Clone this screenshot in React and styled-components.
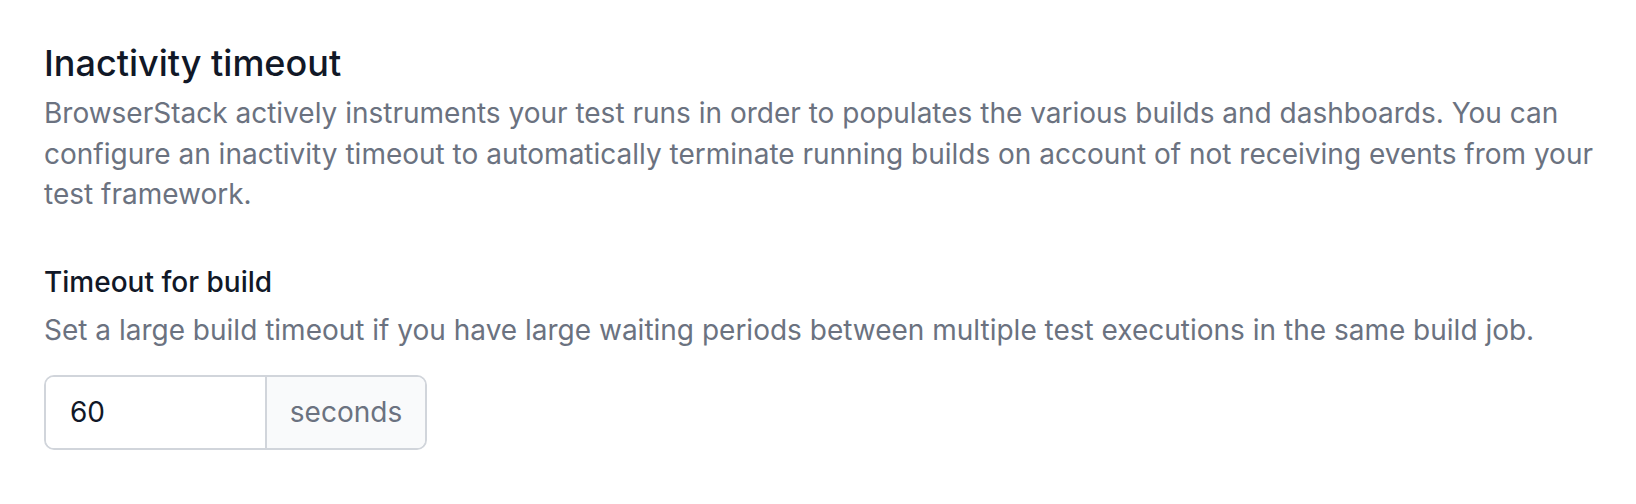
import React, { useState } from 'react';
import styled, { createGlobalStyle } from 'styled-components';

const GlobalStyle = createGlobalStyle`
    body {
        margin: 0;
        background: #ffffff;
        font-family: Inter, "Noto Sans", sans-serif;
    }
`;

const Page = styled.div`
    padding: 43px 30px 40px 44px;
`;

const Title = styled.h2`
    margin: 0;
    font-size: 36px;
    line-height: 40px;
    font-weight: 500;
    color: #111827;
`;

const Description = styled.p`
    margin: ${(p) => p.$top || 10}px 0 0;
    font-size: 28px;
    line-height: 40.7px;
    font-weight: 400;
    color: #6b7280;
`;

const Field = styled.div`
    margin-top: 49px;
`;

const Label = styled.label`
    display: block;
    font-size: 28px;
    line-height: 36px;
    font-weight: 500;
    color: #111827;
`;

const InputGroup = styled.div`
    display: flex;
    width: 383px;
    height: 75px;
    margin-top: 24px;
    border: 2px solid #d1d5db;
    border-radius: 10px;
    box-sizing: border-box;
    overflow: hidden;
`;

const Input = styled.input`
    flex: 0 0 219px;
    min-width: 0;
    border: none;
    outline: none;
    padding: 0 24px;
    box-sizing: border-box;
    font-family: inherit;
    font-size: 28px;
    color: #111827;
    background: #ffffff;
`;

const Addon = styled.span`
    flex: 1;
    display: flex;
    align-items: center;
    justify-content: center;
    border-left: 2px solid #d1d5db;
    background: #f9fafb;
    font-size: 28px;
    color: #6b7280;
`;

function App() {
    const [timeout, timeoutSet] = useState('60');
    return (
        <Page>
            <GlobalStyle />
            <Title>Inactivity timeout</Title>
            <Description>
                BrowserStack actively instruments your test runs in order to populates the various builds and
                dashboards. You can configure an inactivity timeout to automatically terminate running builds on
                account of not receiving events from your test framework.
            </Description>
            <Field>
                <Label htmlFor="build-timeout">Timeout for build</Label>
                <Description $top={10}>
                    Set a large build timeout if you have large waiting periods between multiple test executions in
                    the same build job.
                </Description>
                <InputGroup>
                    <Input id="build-timeout" value={timeout} onChange={(e) => timeoutSet(e.target.value)} />
                    <Addon>seconds</Addon>
                </InputGroup>
            </Field>
        </Page>
    );
}

export default App;
